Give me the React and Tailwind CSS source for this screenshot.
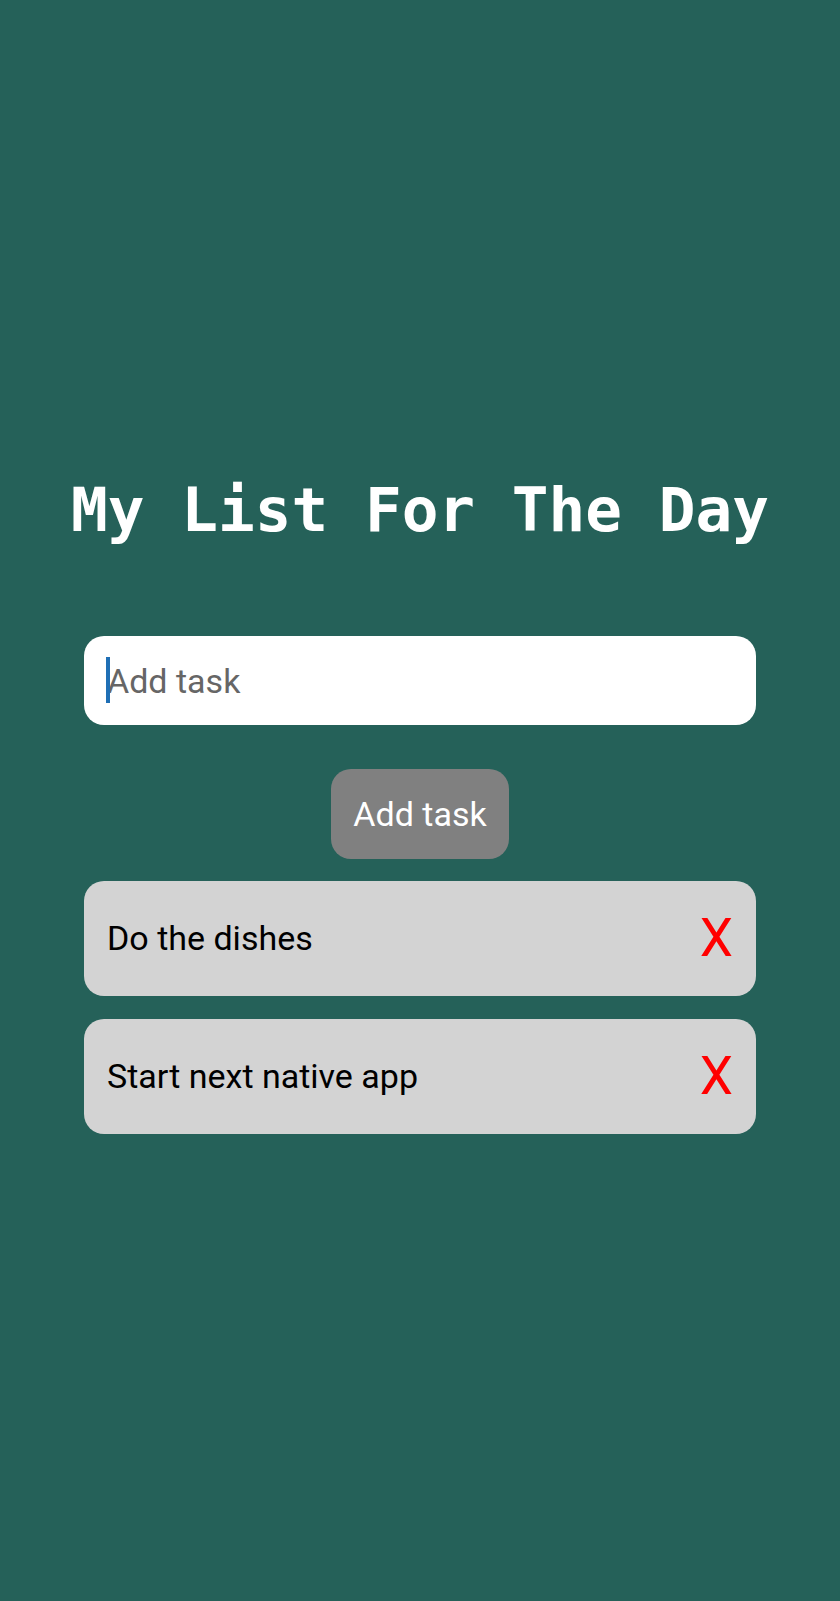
import { useState } from 'react';

const TASKS = ['Do the dishes', 'Start next native app'];

export default function App() {
  const [tasks, setTasks] = useState(TASKS);
  const [text, setText]   = useState('');

  const addTask = () => {
    if (!text.trim()) return;
    setTasks([...tasks, text.trim()]);
    setText('');
  };

  return (
    <div className="min-h-[1601px] w-full bg-[#256159] flex flex-col items-center pt-[479px] font-['Roboto',sans-serif]">
      {/* Title */}
      <h1 className="text-[61px] leading-[61px] font-bold text-white font-['DejaVu_Sans_Mono',monospace]">
        My List For The Day
      </h1>

      {/* Input */}
      <div className="relative mt-[96px] w-[672px]">
        <input
          value={text}
          onChange={(e) => setText(e.target.value)}
          placeholder="Add task"
          className="w-full h-[89px] rounded-[20px] bg-white pl-[23px] pr-4 text-[34px] text-black placeholder:text-[#666666] outline-none"
        />
        {!text && <span className="absolute left-[22px] top-[21px] w-[4px] h-[46px] bg-[#1f6fb5]" />}
      </div>

      {/* Button */}
      <button
        onClick={addTask}
        className="mt-[44px] w-[178px] h-[90px] rounded-[20px] bg-[#808080] text-white text-[34px]"
      >
        Add task
      </button>

      {/* Tasks */}
      <div className="mt-[22px] w-[672px] flex flex-col gap-[23px]">
        {tasks.map((t, i) => (
          <div
            key={i}
            className="h-[115px] rounded-[20px] bg-[#d3d3d3] flex items-center justify-between pl-[23px] pr-[23px]"
          >
            <span className="text-[34px] text-black">{t}</span>
            <button
              onClick={() => setTasks(tasks.filter((_, j) => j !== i))}
              className="text-[53px] leading-none text-[#ff0000]"
            >
              X
            </button>
          </div>
        ))}
      </div>
    </div>
  );
}
